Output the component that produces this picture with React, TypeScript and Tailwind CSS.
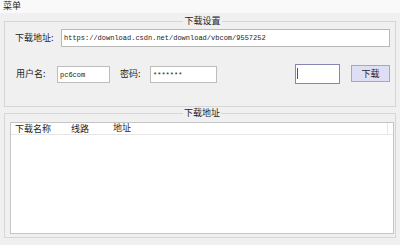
export default function App() {
  return (
    <div className="w-[400px] h-[245px] overflow-hidden bg-[#f0f0f0] text-[9px] leading-[10px] text-[#1e1e1e] font-['Noto_Sans_CJK_SC','Noto_Sans',sans-serif]">
      <div className="h-[13px] bg-[#f9f9f9] px-[3px] leading-[12px]">菜单</div>

      <fieldset className="mx-[4px] mt-[3px] border border-[#d6d6d6] pl-[10px] pr-[5px] pt-[3px] pb-[22px]">
        <legend className="mx-auto px-[1px] leading-[10px]">下载设置</legend>
        <div className="flex h-[18px] items-center">
          <span className="w-[46px] shrink-0">下载地址:</span>
          <div className="flex h-[18px] flex-1 items-center border border-[#b9b9b9] bg-white pl-[2px] font-['Liberation_Mono',monospace] text-[7px] leading-[8px] text-[#222]">
            https://download.csdn.net/download/vbcom/9557252
          </div>
        </div>
        <div className="mt-[16px] flex h-[21px] items-center">
          <span className="ml-[1px] w-[41px] shrink-0">用户名:</span>
          <div className="mt-[2px] flex h-[17px] w-[53px] items-center border border-[#bdbdbd] bg-white pl-[2px] font-['Liberation_Mono',monospace] text-[7px] leading-[8px] text-[#222]">
            pc6com
          </div>
          <span className="ml-[10px] w-[30px] shrink-0">密码:</span>
          <div className="mt-[2px] flex h-[17px] w-[67px] items-center border border-[#bdbdbd] bg-white pl-[2px] font-['Liberation_Mono',monospace] text-[7px] leading-[8px] text-[#222]">
            *******
          </div>
          <div className="ml-auto flex h-[20px] w-[45px] items-center border border-[#8686b2] bg-white pl-[1px]">
            <span className="h-[11px] w-[1px] bg-[#555]" />
          </div>
          <button className="ml-[11px] h-[17px] w-[39px] border border-[#a6a6cc] bg-[#dedef4] text-[9px] leading-[10px] text-[#1e1e1e]">
            下载
          </button>
        </div>
      </fieldset>

      <fieldset className="mx-[4px] mt-[1px] border border-[#d6d6d6] pl-[5px] pr-[1px] pt-[4px] pb-[3px]">
        <legend className="mx-auto px-[1px] leading-[10px]">下载地址</legend>
        <div className="h-[112px] border border-[#c6c6c6] bg-white">
          <div className="flex h-[12px] items-center border-b border-[#e6e6e6]">
            <span className="w-[60px] shrink-0 pl-[4px]">下载名称</span>
            <span className="w-[42px] shrink-0">线路</span>
            <span className="h-full w-[275px] shrink-0 border-r border-[#e6e6e6]">地址</span>
          </div>
        </div>
      </fieldset>
    </div>
  );
}
